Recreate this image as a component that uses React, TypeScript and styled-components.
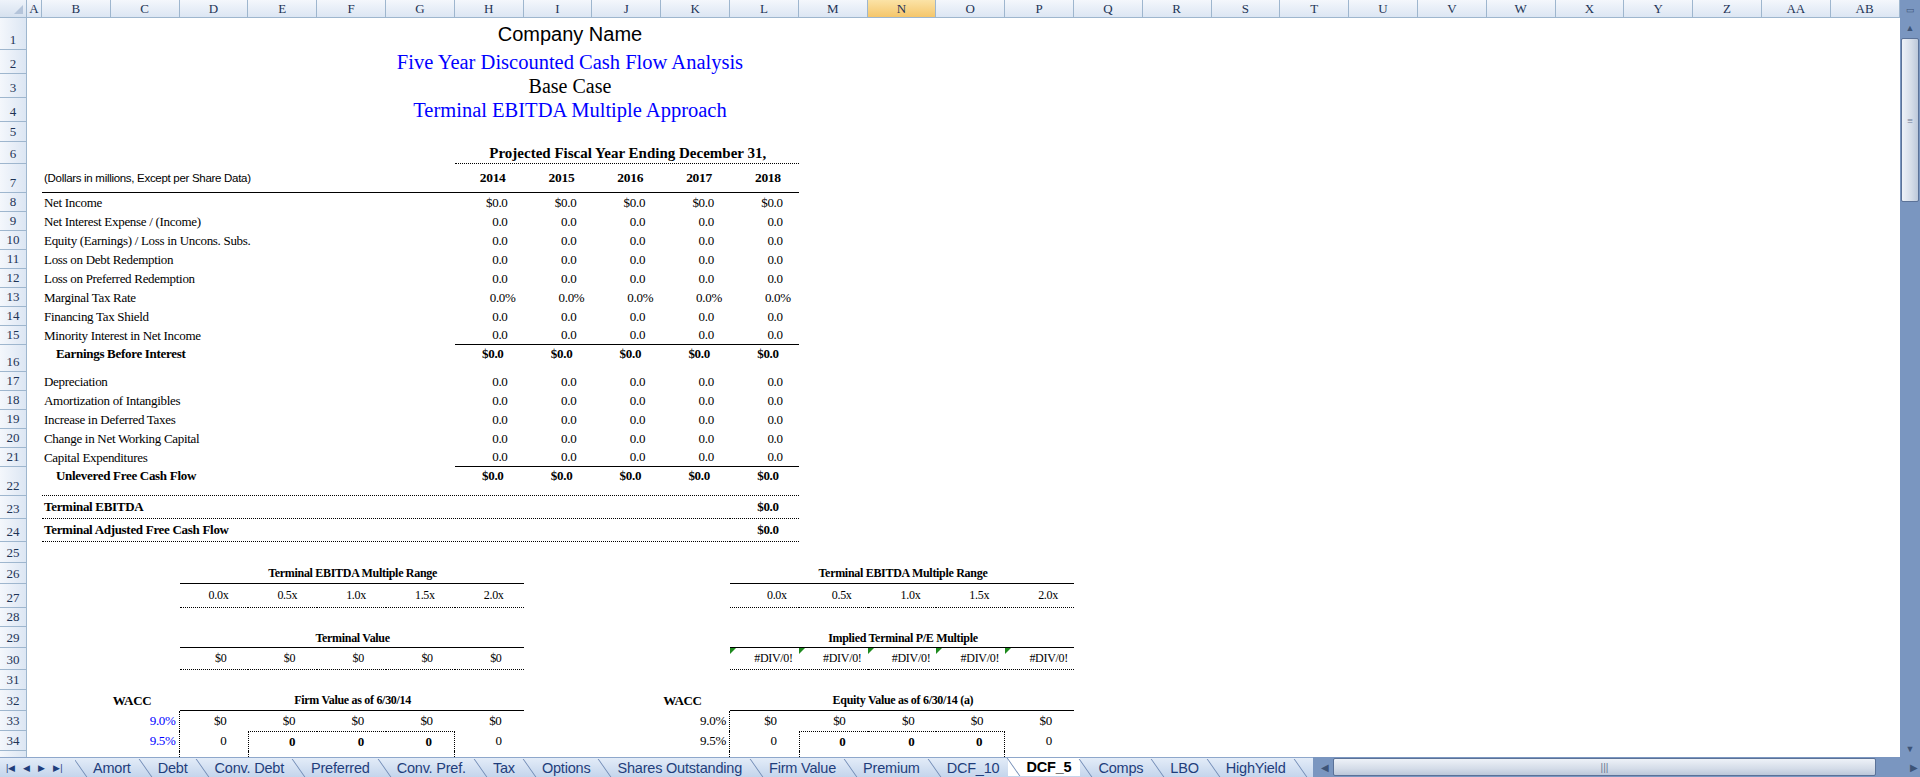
import React from 'react';
import styled, { createGlobalStyle, css } from 'styled-components';

const GlobalStyle = createGlobalStyle`
  html, body { margin: 0; padding: 0; background: #fff; overflow: hidden; }
  body { font-family: 'Liberation Serif', serif; }
`;

const LETTERS = ['A','B','C','D','E','F','G','H','I','J','K','L','M','N','O','P','Q','R','S','T','U','V','W','X','Y','Z','AA','AB'];
const ROW_H = [32,24,24,24,20,22,29,19,19,19,19,19,19,19,19,27,19,19,19,19,19,29,23,23,21,21,24,19,21,22,20,21,20,20,20];

// grid column of a sheet letter (col 1 is the row-number column)
const c = (l: string) => LETTERS.indexOf(l) + 2;

type Align = 'left' | 'right' | 'center';
type Line = 'solid' | 'dotted' | 'none';

interface CellProps {
  $col: number;
  $row: number;
  $span?: number;
  $align?: Align;
  $v?: 'start' | 'center' | 'end';
  $bold?: boolean;
  $color?: string;
  $size?: number;
  $sans?: boolean;
  $bb?: Line;
  $bt?: Line;
  $bl?: Line;
  $br?: Line;
  $pr?: number;
  $pl?: number;
  $flag?: boolean;
}

const line = (l?: Line) => (l === 'solid' ? '1.5px solid #000' : l === 'dotted' ? '1px dotted #000' : 'none');

const Page = styled.div`
  display: flex;
  flex-direction: column;
  width: 1920px;
  height: 777px;
`;

const Top = styled.div`
  display: flex;
  height: 757px;
  overflow: hidden;
`;

const Sheet = styled.div`
  display: grid;
  grid-template-columns: 27px 15px repeat(27, 68.8px);
  grid-template-rows: 18px ${ROW_H.map((h) => h + 'px').join(' ')};
  width: 1900px;
  height: 757px;
  overflow: hidden;
`;

const Corner = styled.div`
  grid-column: 1;
  grid-row: 1;
  background: linear-gradient(#eef3fa, #d6e1ef);
  border-right: 1px solid #9eb6ce;
  border-bottom: 1px solid #9eb6ce;
  position: relative;
  &::after {
    content: '';
    position: absolute;
    right: 3px;
    bottom: 3px;
    border-left: 9px solid transparent;
    border-bottom: 9px solid #b4c4da;
  }
`;

const ColHead = styled.div<{ $col: number; $active?: boolean }>`
  grid-column: ${(p) => p.$col};
  grid-row: 1;
  display: flex;
  align-items: center;
  justify-content: center;
  font-size: 13px;
  color: #1e3456;
  background: ${(p) => (p.$active ? 'linear-gradient(#fbe3a6, #f5c66b)' : 'linear-gradient(#f4f7fc, #dce6f3)')};
  border-right: 1px solid #9eb6ce;
  border-bottom: 1px solid #9eb6ce;
`;

const RowHead = styled.div<{ $row: number }>`
  grid-column: 1;
  grid-row: ${(p) => p.$row};
  display: flex;
  align-items: flex-end;
  justify-content: center;
  padding-bottom: 1px;
  font-size: 13px;
  color: #1e3456;
  background: linear-gradient(90deg, #f4f7fc, #dce6f3);
  border-right: 1px solid #9eb6ce;
  border-bottom: 1px solid #9eb6ce;
  overflow: hidden;
`;

const Cell = styled.div<CellProps>`
  grid-column: ${(p) => p.$col} / span ${(p) => p.$span ?? 1};
  grid-row: ${(p) => p.$row};
  display: flex;
  align-items: ${(p) => (p.$v === 'start' ? 'flex-start' : p.$v === 'center' ? 'center' : 'flex-end')};
  justify-content: ${(p) => (p.$align === 'right' ? 'flex-end' : p.$align === 'center' ? 'center' : 'flex-start')};
  padding: 1px ${(p) => p.$pr ?? 0}px 1px ${(p) => p.$pl ?? 2}px;
  font-family: ${(p) => (p.$sans ? "'Liberation Sans', Arial, sans-serif" : "'Liberation Serif', 'Times New Roman', serif")};
  font-size: ${(p) => p.$size ?? 13}px;
  font-weight: ${(p) => (p.$bold ? 700 : 400)};
  color: ${(p) => p.$color ?? '#000'};
  letter-spacing: ${(p) => (p.$size && p.$size > 14 ? 0 : -0.3)}px;
  white-space: nowrap;
  min-width: 0;
  overflow: hidden;
  border-bottom: ${(p) => line(p.$bb)};
  border-top: ${(p) => line(p.$bt)};
  border-left: ${(p) => line(p.$bl)};
  border-right: ${(p) => line(p.$br)};
  position: relative;
  ${(p) =>
    p.$flag &&
    css`
      &::before {
        content: '';
        position: absolute;
        left: 0;
        top: 0;
        border-top: 6px solid #1e8a1e;
        border-right: 6px solid transparent;
      }
    `}
`;

const VScroll = styled.div`
  width: 20px;
  background: #7a96c0;
  display: flex;
  flex-direction: column;
  align-items: center;
  padding-top: 2px;
  gap: 2px;
`;

const ScrollBtn = styled.div`
  width: 16px;
  height: 16px;
  display: flex;
  align-items: center;
  justify-content: center;
  color: #3d5478;
  font-size: 9px;
`;

const VThumb = styled.div`
  width: 16px;
  height: 162px;
  border: 1px solid #5b7298;
  border-radius: 2px;
  background: linear-gradient(90deg, #eef2f8, #d4dce8 60%, #bcc8da);
  display: flex;
  align-items: center;
  justify-content: center;
  color: #6a7890;
  font-size: 10px;
`;

const Spacer = styled.div`
  flex: 1;
`;

const TabBar = styled.div`
  display: flex;
  height: 20px;
  background: #7a96c0;
  font-family: 'Liberation Sans', Arial, sans-serif;
`;

const Nav = styled.div`
  display: flex;
  align-items: center;
  gap: 8px;
  padding: 0 10px 0 6px;
  width: 59px;
  background: linear-gradient(#e3ecf8, #c4d5ec);
  color: #1f3e7c;
  font-size: 9px;
  border-top: 1px solid #8ea7cb;
`;

const Tabs = styled.div`
  display: flex;
  width: 1238px;
  overflow: hidden;
  background: linear-gradient(#e3ecf8, #c4d5ec);
  border-top: 1px solid #8ea7cb;
`;

const Tab = styled.div<{ $active?: boolean }>`
  position: relative;
  display: flex;
  align-items: center;
  height: 19px;
  padding: 0 9px 0 18px;
  font-size: 14.5px;
  letter-spacing: -0.2px;
  white-space: nowrap;
  color: ${(p) => (p.$active ? '#000' : '#1f3e7c')};
  font-weight: ${(p) => (p.$active ? 700 : 400)};
  background: ${(p) => (p.$active ? '#fff' : 'transparent')};
  margin-top: ${(p) => (p.$active ? '-1px' : '0')};
  &::before {
    content: '';
    position: absolute;
    left: 5px;
    top: 1px;
    height: 18px;
    border-left: 1px solid #6d88b3;
    transform: skewX(35deg);
  }
`;

const HScroll = styled.div`
  flex: 1;
  display: flex;
  align-items: center;
  gap: 4px;
  padding: 0 2px 0 8px;
  color: #3d5478;
  font-size: 10px;
`;

const HThumb = styled.div`
  flex: 1;
  height: 16px;
  border: 1px solid #5b7298;
  border-radius: 2px;
  background: linear-gradient(#eef2f8, #d4dce8 60%, #bcc8da);
  display: flex;
  align-items: center;
  justify-content: center;
  color: #6a7890;
  font-size: 10px;
  margin-right: 30px;
`;

const YEARS = ['2014', '2015', '2016', '2017', '2018'];
const DATA_COLS = ['H', 'I', 'J', 'K', 'L'];

const LINES: { row: number; label: string; val: string; bold?: boolean; indent?: boolean; bb?: Line; pct?: boolean }[] = [
  { row: 8, label: 'Net Income', val: '$0.0' },
  { row: 9, label: 'Net Interest Expense / (Income)', val: '0.0' },
  { row: 10, label: 'Equity (Earnings) / Loss in Uncons. Subs.', val: '0.0' },
  { row: 11, label: 'Loss on Debt Redemption', val: '0.0' },
  { row: 12, label: 'Loss on Preferred Redemption', val: '0.0' },
  { row: 13, label: 'Marginal Tax Rate', val: '0.0%', pct: true },
  { row: 14, label: 'Financing Tax Shield', val: '0.0' },
  { row: 15, label: 'Minority Interest in Net Income', val: '0.0', bb: 'solid' },
  { row: 16, label: 'Earnings Before Interest', val: '$0.0', bold: true, indent: true },
  { row: 17, label: 'Depreciation', val: '0.0' },
  { row: 18, label: 'Amortization of Intangibles', val: '0.0' },
  { row: 19, label: 'Increase in Deferred Taxes', val: '0.0' },
  { row: 20, label: 'Change in Net Working Capital', val: '0.0' },
  { row: 21, label: 'Capital Expenditures', val: '0.0', bb: 'solid' },
  { row: 22, label: 'Unlevered Free Cash Flow', val: '$0.0', bold: true, indent: true },
];

const LEFT5 = ['D', 'E', 'F', 'G', 'H'];
const RIGHT5 = ['L', 'M', 'N', 'O', 'P'];
const MULTS = ['0.0x', '0.5x', '1.0x', '1.5x', '2.0x'];
const TABS = ['Amort', 'Debt', 'Conv. Debt', 'Preferred', 'Conv. Pref.', 'Tax', 'Options', 'Shares Outstanding', 'Firm Value', 'Premium', 'DCF_10', 'DCF_5', 'Comps', 'LBO', 'HighYield', 'El'];

// grid row of a sheet row number
const r = (n: number) => n + 1;

const SensBlock = ({ cols, wacc, title, pctColor, labelCol }: { cols: string[]; wacc: string; title: string; pctColor: string; labelCol: string }) => (
  <>
    <Cell $col={c(wacc)} $row={r(32)} $bold $v="center" $pl={2}>WACC</Cell>
    <Cell $col={c(cols[0])} $row={r(32)} $span={5} $align="center" $bold $size={12} $v="center" $bb="solid">{title}</Cell>
    {['9.0%', '9.5%', '10.0%'].map((p, i) => (
      <Cell key={p} $col={c(labelCol)} $row={r(33 + i)} $align="right" $pr={3} $color={pctColor} $br="dotted" $v="center">{p}</Cell>
    ))}
    {cols.map((k) => (
      <Cell key={'a' + k} $col={c(k)} $row={r(33)} $align="right" $pr={22} $v="center">$0</Cell>
    ))}
    {[34, 35].map((row) =>
      cols.map((k, i) => {
        const inner = i > 0 && i < 4;
        return (
          <Cell
            key={row + k}
            $col={c(k)}
            $row={r(row)}
            $align="right"
            $pr={22}
            $v="center"
            $bold={inner}
            $bt={inner && row === 34 ? 'dotted' : 'none'}
            $bl={i === 1 ? 'dotted' : 'none'}
            $br={i === 3 ? 'dotted' : 'none'}
          >
            0
          </Cell>
        );
      })
    )}
  </>
);

export default function App() {
  return (
    <Page>
      <GlobalStyle />
      <Top>
        <Sheet>
          <Corner />
          {LETTERS.map((l) => (
            <ColHead key={l} $col={c(l)} $active={l === 'N'}>{l}</ColHead>
          ))}
          {ROW_H.map((_, i) => (
            <RowHead key={i} $row={i + 2}>{i + 1}</RowHead>
          ))}

          <Cell $col={c('E')} $row={r(1)} $span={9} $align="center" $pl={24} $sans $size={20} $v="center">Company Name</Cell>
          <Cell $col={c('E')} $row={r(2)} $span={9} $align="center" $pl={24} $size={20.5} $color="#0000ff" $v="center">Five Year Discounted Cash Flow Analysis</Cell>
          <Cell $col={c('E')} $row={r(3)} $span={9} $align="center" $pl={24} $size={20} $v="center">Base Case</Cell>
          <Cell $col={c('E')} $row={r(4)} $span={9} $align="center" $pl={24} $size={20.5} $color="#0000ff" $v="center">Terminal EBITDA Multiple Approach</Cell>

          <Cell $col={c('H')} $row={r(6)} $span={5} $align="center" $bold $size={15} $bb="dotted">Projected Fiscal Year Ending December 31,</Cell>
          <Cell $col={c('B')} $row={r(7)} $span={5} $sans $size={11.5} $v="center" $bb="solid">(Dollars in millions, Except per Share Data)</Cell>
          <Cell $col={c('G')} $row={r(7)} $bb="solid" />
          {DATA_COLS.map((k, i) => (
            <Cell key={k} $col={c(k)} $row={r(7)} $align="right" $pr={18} $bold $size={13.5} $v="center" $bb="solid">{YEARS[i]}</Cell>
          ))}

          {LINES.map((ln) => (
            <React.Fragment key={ln.row}>
              <Cell $col={c('B')} $row={r(ln.row)} $span={4} $bold={ln.bold} $pl={ln.indent ? 14 : 2} $v={ln.bold ? 'start' : 'end'}>{ln.label}</Cell>
              {DATA_COLS.map((k) => (
                <Cell key={k} $col={c(k)} $row={r(ln.row)} $align="right" $pr={ln.pct ? 8 : ln.bold ? 20 : 16} $bold={ln.bold} $bb={ln.bb} $v={ln.bold ? 'start' : 'end'}>{ln.val}</Cell>
              ))}
            </React.Fragment>
          ))}
          <Cell $col={c('B')} $row={r(22)} $span={11} $bb="dotted" />
          <Cell $col={c('B')} $row={r(23)} $span={10} $bold $v="center" $bb="dotted">Terminal EBITDA</Cell>
          <Cell $col={c('L')} $row={r(23)} $align="right" $pr={20} $bold $v="center" $bb="dotted">$0.0</Cell>
          <Cell $col={c('B')} $row={r(24)} $span={10} $bold $v="center" $bb="dotted">Terminal Adjusted Free Cash Flow</Cell>
          <Cell $col={c('L')} $row={r(24)} $align="right" $pr={20} $bold $v="center" $bb="dotted">$0.0</Cell>

          <Cell $col={c('D')} $row={r(26)} $span={5} $align="center" $bold $size={12} $v="center" $bb="solid">Terminal EBITDA Multiple Range</Cell>
          <Cell $col={c('L')} $row={r(26)} $span={5} $align="center" $bold $size={12} $v="center" $bb="solid">Terminal EBITDA Multiple Range</Cell>
          {LEFT5.map((k, i) => (
            <Cell key={k} $col={c(k)} $row={r(27)} $align="right" $pr={20} $size={12} $v="center" $bb="dotted">{MULTS[i]}</Cell>
          ))}
          {RIGHT5.map((k, i) => (
            <Cell key={k} $col={c(k)} $row={r(27)} $align="right" $pr={i === 0 ? 12 : 16} $size={12} $v="center" $bb="dotted">{MULTS[i]}</Cell>
          ))}

          <Cell $col={c('D')} $row={r(29)} $span={5} $align="center" $bold $size={12} $v="end" $bb="solid">Terminal Value</Cell>
          <Cell $col={c('L')} $row={r(29)} $span={5} $align="center" $bold $size={12} $v="end" $bb="solid">Implied Terminal P/E Multiple</Cell>
          {LEFT5.map((k) => (
            <Cell key={k} $col={c(k)} $row={r(30)} $align="right" $pr={22} $size={12} $v="center" $bb="dotted">$0</Cell>
          ))}
          {RIGHT5.map((k) => (
            <Cell key={k} $col={c(k)} $row={r(30)} $align="right" $pr={6} $size={12} $v="center" $bb="dotted" $flag>#DIV/0!</Cell>
          ))}

          <SensBlock cols={LEFT5} wacc="C" labelCol="C" title="Firm Value as of 6/30/14" pctColor="#0000ff" />
          <SensBlock cols={RIGHT5} wacc="K" labelCol="K" title="Equity Value as of 6/30/14 (a)" pctColor="#000" />
        </Sheet>
        <VScroll>
          <ScrollBtn>▭</ScrollBtn>
          <ScrollBtn>▲</ScrollBtn>
          <VThumb>≡</VThumb>
          <Spacer />
          <ScrollBtn>▼</ScrollBtn>
        </VScroll>
      </Top>
      <TabBar>
        <Nav>
          <span>|◀</span>
          <span>◀</span>
          <span>▶</span>
          <span>▶|</span>
        </Nav>
        <Tabs>
          {TABS.map((t) => (
            <Tab key={t} $active={t === 'DCF_5'}>{t}</Tab>
          ))}
        </Tabs>
        <HScroll>
          <span>◀</span>
          <HThumb>|||</HThumb>
          <span>▶</span>
        </HScroll>
      </TabBar>
    </Page>
  );
}
